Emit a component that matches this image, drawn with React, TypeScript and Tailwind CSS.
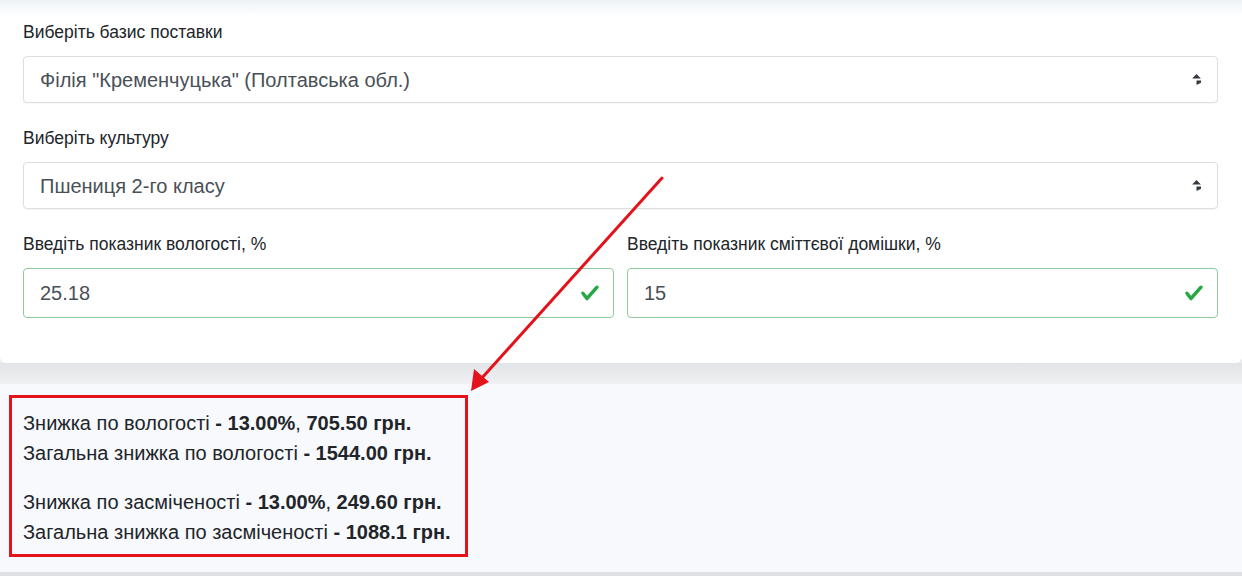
import React from "react";

const Arrows = () => (
  <svg width="9" height="11" viewBox="0 0 4 5" className="shrink-0">
    <path d="M2 0L0 2h4zm0 5L2 3h4z" fill="#343a40" />
  </svg>
);

const Check = () => (
  <svg width="20" height="20" viewBox="0 0 8 8" className="shrink-0">
    <path
      d="M2.3 6.73L.6 4.53c-.4-1.04.46-1.4 1.1-.8l1.1 1.4 3.4-3.8c.6-.63 1.6-.27 1.2.7l-4 4.6c-.43.5-.8.4-1.1.1z"
      fill="#28a745"
    />
  </svg>
);

function SelectBox({ label, value }: { label: string; value: string }) {
  return (
    <div className="mb-[23px]">
      <div className="mb-[12px] text-[17.5px] leading-[24px] text-[#212529]">{label}</div>
      <div className="flex h-[47px] items-center justify-between rounded-[4px] border border-[#dedede] bg-white pl-[16px] pr-[16px] shadow-[0_1px_2px_rgba(0,0,0,0.04)]">
        <span className="text-[20px] text-[#495057]">{value}</span>
        <Arrows />
      </div>
    </div>
  );
}

function ValidInput({ label, value }: { label: string; value: string }) {
  return (
    <div className="flex-1">
      <div className="mb-[12px] text-[17.5px] leading-[24px] text-[#212529]">{label}</div>
      <div className="flex h-[50px] items-center justify-between rounded-[4px] border border-[#8fca9c] bg-white pl-[16px] pr-[13px]">
        <span className="text-[20px] text-[#495057]">{value}</span>
        <Check />
      </div>
    </div>
  );
}

export default function App() {
  return (
    <div className="relative h-[576px] w-[1242px] overflow-hidden bg-[#f8f9fc] font-['Liberation_Sans',Arial,sans-serif]">
      {/* form card */}
      <div className="rounded-b-[6px] bg-white shadow-[0_2px_6px_rgba(0,0,0,0.12)]">
        <div className="h-[16px] bg-gradient-to-b from-[#eef2f7] to-white" />
        <div className="pb-[45px] pl-[23px] pr-[24px] pt-[4px]">
          <SelectBox label="Виберіть базис поставки" value={'Філія "Кременчуцька" (Полтавська обл.)'} />
          <SelectBox label="Виберіть культуру" value="Пшениця 2-го класу" />
          <div className="flex gap-[13px]">
            <ValidInput label="Введіть показник вологості, %" value="25.18" />
            <ValidInput label="Введіть показник сміттєвої домішки, %" value="15" />
          </div>
        </div>
      </div>

      <div className="h-[21px] bg-gradient-to-b from-[#e3e4e7] to-[#eef0f2]" />

      {/* results */}
      <div className="ml-[9px] mt-[11px] w-[459px] border-[3px] border-[#e3121b] pb-[7px] pl-[11px] pt-[10px] text-[20px] leading-[30px] text-[#212529]">
        <div>
          Знижка по вологості <b>- 13.00%</b>, <b>705.50 грн.</b>
        </div>
        <div>
          Загальна знижка по вологості <b>- 1544.00 грн.</b>
        </div>
        <div className="mt-[19px]">
          Знижка по засміченості <b>- 13.00%</b>, <b>249.60 грн.</b>
        </div>
        <div>
          Загальна знижка по засміченості <b>- 1088.1 грн.</b>
        </div>
      </div>

      <div className="absolute bottom-0 left-0 h-[4px] w-full bg-[#dfe1e4]" />

      {/* annotation arrow */}
      <svg className="pointer-events-none absolute left-0 top-0" width="1242" height="576">
        <line x1="662" y1="178" x2="481" y2="379" stroke="#e3121b" strokeWidth="3" strokeLinecap="round" />
        <polygon points="471,391 474,369 489,382" fill="#e3121b" />
      </svg>
    </div>
  );
}
